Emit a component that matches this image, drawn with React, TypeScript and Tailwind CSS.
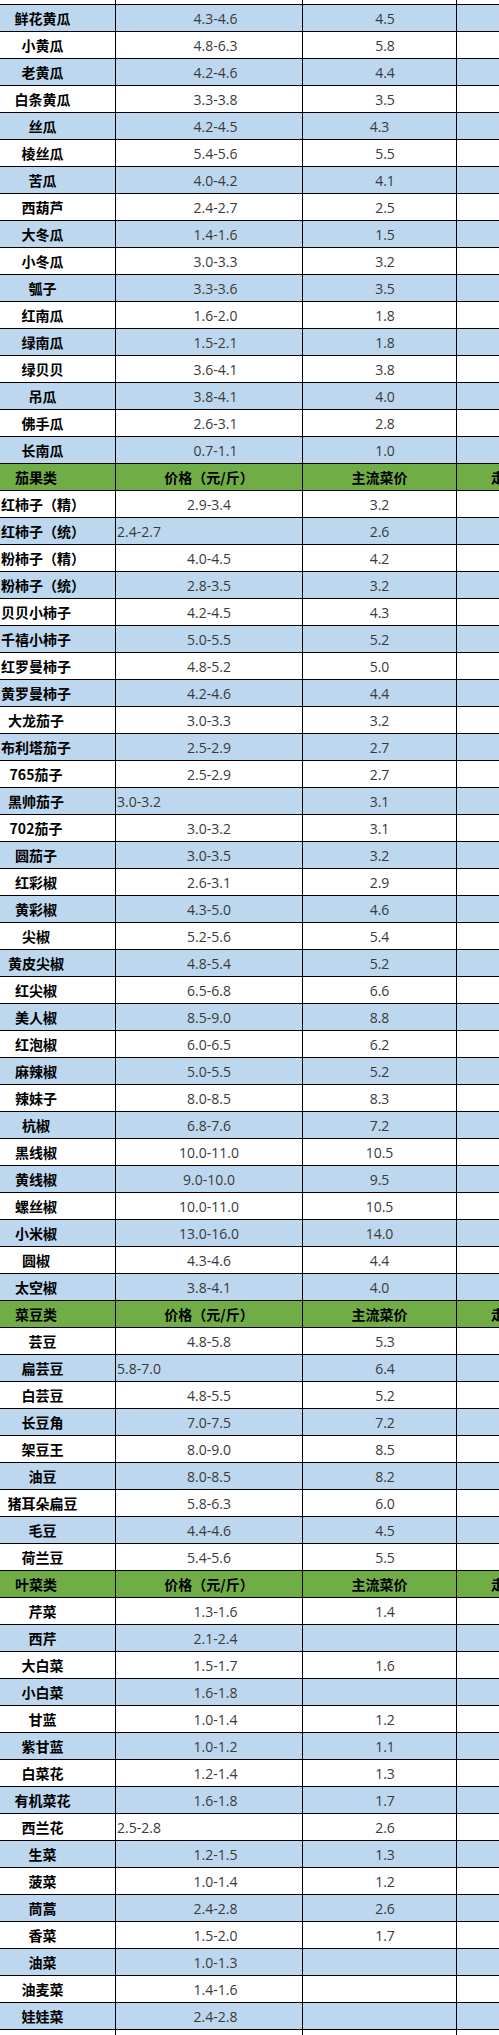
type Row = {
  name: string;
  price: string;
  main: string;
  nameLeft?: boolean;
  priceLeft?: boolean;
  mainCenter?: boolean;
};

type Section = {
  title?: string;
  offset: number;
  nameBox: string;
  pricePad: string;
  mainPad: string;
  rows: Row[];
};

const r = (name: string, price: string, main: string, extra: Partial<Row> = {}): Row => ({
  name,
  price,
  main,
  ...extra,
});

const sections: Section[] = [
  {
    offset: 1,
    nameBox: "w-[85px] justify-center",
    pricePad: "pl-[13px]",
    mainPad: "pl-[11px]",
    rows: [
      r("鲜花黄瓜", "4.3-4.6", "4.5"),
      r("小黄瓜", "4.8-6.3", "5.8"),
      r("老黄瓜", "4.2-4.6", "4.4"),
      r("白条黄瓜", "3.3-3.8", "3.5"),
      r("丝瓜", "4.2-4.5", "4.3", { mainCenter: true }),
      r("棱丝瓜", "5.4-5.6", "5.5"),
      r("苦瓜", "4.0-4.2", "4.1"),
      r("西葫芦", "2.4-2.7", "2.5"),
      r("大冬瓜", "1.4-1.6", "1.5"),
      r("小冬瓜", "3.0-3.3", "3.2"),
      r("瓠子", "3.3-3.6", "3.5"),
      r("红南瓜", "1.6-2.0", "1.8"),
      r("绿南瓜", "1.5-2.1", "1.8"),
      r("绿贝贝", "3.6-4.1", "3.8"),
      r("吊瓜", "3.8-4.1", "4.0"),
      r("佛手瓜", "2.6-3.1", "2.8"),
      r("长南瓜", "0.7-1.1", "1.0"),
    ],
  },
  {
    title: "茄果类",
    offset: 0,
    nameBox: "w-[72px] justify-center",
    pricePad: "pl-0",
    mainPad: "pl-0",
    rows: [
      r("红柿子（精）", "2.9-3.4", "3.2", { nameLeft: true }),
      r("红柿子（统）", "2.4-2.7", "2.6", { nameLeft: true, priceLeft: true }),
      r("粉柿子（精）", "4.0-4.5", "4.2", { nameLeft: true }),
      r("粉柿子（统）", "2.8-3.5", "3.2", { nameLeft: true }),
      r("贝贝小柿子", "4.2-4.5", "4.3"),
      r("千禧小柿子", "5.0-5.5", "5.2"),
      r("红罗曼柿子", "4.8-5.2", "5.0"),
      r("黄罗曼柿子", "4.2-4.6", "4.4"),
      r("大龙茄子", "3.0-3.3", "3.2"),
      r("布利塔茄子", "2.5-2.9", "2.7"),
      r("765茄子", "2.5-2.9", "2.7"),
      r("黑帅茄子", "3.0-3.2", "3.1", { priceLeft: true }),
      r("702茄子", "3.0-3.2", "3.1"),
      r("圆茄子", "3.0-3.5", "3.2"),
      r("红彩椒", "2.6-3.1", "2.9"),
      r("黄彩椒", "4.3-5.0", "4.6"),
      r("尖椒", "5.2-5.6", "5.4"),
      r("黄皮尖椒", "4.8-5.4", "5.2"),
      r("红尖椒", "6.5-6.8", "6.6"),
      r("美人椒", "8.5-9.0", "8.8"),
      r("红泡椒", "6.0-6.5", "6.2"),
      r("麻辣椒", "5.0-5.5", "5.2"),
      r("辣妹子", "8.0-8.5", "8.3"),
      r("杭椒", "6.8-7.6", "7.2"),
      r("黑线椒", "10.0-11.0", "10.5"),
      r("黄线椒", "9.0-10.0", "9.5"),
      r("螺丝椒", "10.0-11.0", "10.5"),
      r("小米椒", "13.0-16.0", "14.0"),
      r("圆椒", "4.3-4.6", "4.4"),
      r("太空椒", "3.8-4.1", "4.0"),
    ],
  },
  {
    title: "菜豆类",
    offset: 0,
    nameBox: "w-[85px] justify-center",
    pricePad: "pl-0",
    mainPad: "pl-[11px]",
    rows: [
      r("芸豆", "4.8-5.8", "5.3"),
      r("扁芸豆", "5.8-7.0", "6.4", { priceLeft: true }),
      r("白芸豆", "4.8-5.5", "5.2"),
      r("长豆角", "7.0-7.5", "7.2"),
      r("架豆王", "8.0-9.0", "8.5"),
      r("油豆", "8.0-8.5", "8.2"),
      r("猪耳朵扁豆", "5.8-6.3", "6.0"),
      r("毛豆", "4.4-4.6", "4.5"),
      r("荷兰豆", "5.4-5.6", "5.5"),
    ],
  },
  {
    title: "叶菜类",
    offset: 0,
    nameBox: "w-[85px] justify-center",
    pricePad: "pl-[13px]",
    mainPad: "pl-[11px]",
    rows: [
      r("芹菜", "1.3-1.6", "1.4"),
      r("西芹", "2.1-2.4", ""),
      r("大白菜", "1.5-1.7", "1.6"),
      r("小白菜", "1.6-1.8", ""),
      r("甘蓝", "1.0-1.4", "1.2"),
      r("紫甘蓝", "1.0-1.2", "1.1"),
      r("白菜花", "1.2-1.4", "1.3"),
      r("有机菜花", "1.6-1.8", "1.7"),
      r("西兰花", "2.5-2.8", "2.6", { priceLeft: true }),
      r("生菜", "1.2-1.5", "1.3"),
      r("菠菜", "1.0-1.4", "1.2"),
      r("茼蒿", "2.4-2.8", "2.6"),
      r("香菜", "1.5-2.0", "1.7"),
      r("油菜", "1.0-1.3", ""),
      r("油麦菜", "1.4-1.6", ""),
      r("娃娃菜", "2.4-2.8", ""),
    ],
  },
];

const grid = "grid grid-cols-[116px_187px_154px_120px] border-b border-black";
const cell = "border-r border-black flex items-center overflow-visible whitespace-nowrap";
const nameFont = "font-['Noto_Sans_CJK_SC',sans-serif] font-bold text-[14px] text-black";
const numFont = "font-['Open_Sans','Noto_Sans_CJK_SC',sans-serif] text-[14px] text-[#3a3a3a]";

function HeaderRow({ title }: { title: string }) {
  return (
    <div className={`${grid} h-[27px] bg-[#70AD47]`}>
      <div className={`${cell} ${nameFont} text-[#1a1a1a]`}>
        <div className="flex w-[72px] justify-center">{title}</div>
      </div>
      <div className={`${cell} ${nameFont} text-[#1a1a1a] justify-center`}>价格（元/斤）</div>
      <div className={`${cell} ${nameFont} text-[#1a1a1a] justify-center`}>主流菜价</div>
      <div className={`${cell} ${nameFont} text-[#1a1a1a] pl-[34px]`}>走势</div>
    </div>
  );
}

function DataRow({ row, blue, s }: { row: Row; blue: boolean; s: Section }) {
  return (
    <div className={`${grid} h-[27px] ${blue ? "bg-[#BDD7EE]" : "bg-white"}`}>
      <div className={`${cell} ${nameFont}`}>
        {row.nameLeft ? (
          <div className="pl-[1px]">{row.name}</div>
        ) : (
          <div className={`flex ${s.nameBox}`}>{row.name}</div>
        )}
      </div>
      <div
        className={`${cell} ${numFont} ${row.priceLeft ? "justify-start pl-[1px]" : `justify-center ${s.pricePad}`}`}
      >
        {row.price}
      </div>
      <div className={`${cell} ${numFont} justify-center ${row.mainCenter ? "pl-0" : s.mainPad}`}>
        {row.main}
      </div>
      <div className={cell}></div>
    </div>
  );
}

function BlankRow({ h }: { h: string }) {
  return (
    <div className={`grid grid-cols-[116px_187px_154px_120px] ${h} bg-white`}>
      <div className="border-r border-black"></div>
      <div className="border-r border-black"></div>
      <div className="border-r border-black"></div>
      <div className="border-r border-black"></div>
    </div>
  );
}

export default function App() {
  return (
    <div className="w-[499px] h-[2035px] overflow-hidden bg-white">
      <div className="w-[577px]">
        <div className={`${grid} h-[5px] bg-white`}>
          <div className="border-r border-black"></div>
          <div className="border-r border-black"></div>
          <div className="border-r border-black"></div>
          <div className="border-r border-black"></div>
        </div>
        {sections.map((s, si) => (
          <div key={si}>
            {s.title && <HeaderRow title={s.title} />}
            {s.rows.map((row, i) => (
              <DataRow key={row.name} row={row} s={s} blue={(i + s.offset) % 2 === 1} />
            ))}
          </div>
        ))}
        <BlankRow h="h-[5px]" />
      </div>
    </div>
  );
}
